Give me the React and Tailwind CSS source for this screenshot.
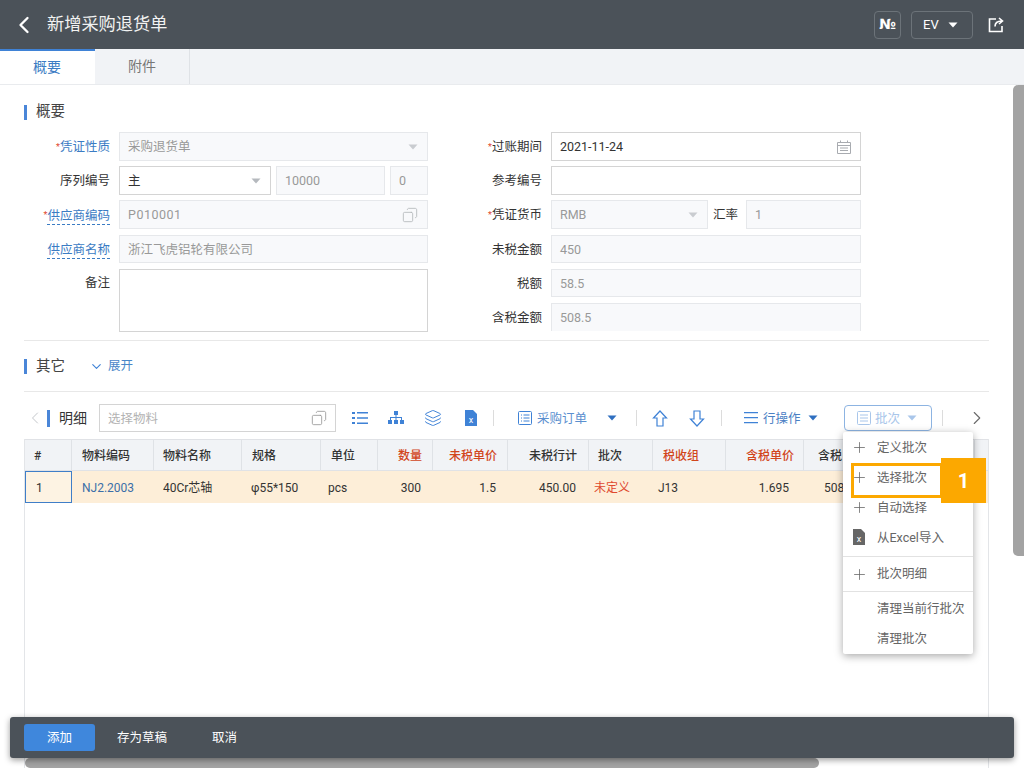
import { ChevronLeft, ChevronRight, ChevronDown, Plus, Layers, Copy } from 'lucide-react';

const font = { fontFamily: 'Roboto, "Noto Sans CJK SC", sans-serif' };

function Caret({ className = 'text-[#b5b9be]' }) {
    return (
        <svg width="10" height="6" viewBox="0 0 10 6" className={className}>
            <path d="M0.5 0.5h9L5 5.5z" fill="currentColor" />
        </svg>
    );
}

function Label({ children, required, link, width, align = 'items-center pt-[2px]' }) {
    return (
        <div className={`shrink-0 flex justify-end text-[12.5px] ${align} ${width} ${link ? 'text-[#3b7cc4]' : 'text-[#333]'}`}>
            {required && <span className="text-[9px] text-[#e0492f]">*</span>}
            <span className={link === 'dashed' ? 'border-b border-dashed border-[#3b7cc4] leading-[17px]' : ''}>{children}</span>
        </div>
    );
}

function Field({ children, disabled, className = '', right }) {
    return (
        <div className={`h-full shrink-0 flex items-center justify-between pl-[8px] pr-[9px] border text-[12.5px] ${disabled ? 'bg-[#f8f9fb] border-[#e6e8eb] text-[#999]' : 'bg-white border-[#d4d4d4] text-[#333]'} ${className}`}>
            <span className="pt-[2px]">{children}</span>
            {right}
        </div>
    );
}

function LeftForm() {
    const label = 'w-[86px]';
    return (
        <div className="w-[428px] pl-[24px] shrink-0">
            <div className="flex h-[29px] gap-[9px]">
                <Label required link width={label}>凭证性质</Label>
                <Field disabled className="w-[309px]" right={<Caret className="text-[#c9ccd0]" />}>采购退货单</Field>
            </div>
            <div className="flex h-[29px] gap-[9px] mt-[5px]">
                <Label width={label}>序列编号</Label>
                <Field className="w-[152px]" right={<Caret />}>主</Field>
                <Field disabled className="w-[109px] ml-[-4px]">10000</Field>
                <Field disabled className="w-[38px] ml-[-4px]">0</Field>
            </div>
            <div className="flex h-[29px] gap-[9px] mt-[5px]">
                <Label required link="dashed" width={label}>供应商编码</Label>
                <Field disabled className="w-[309px] tracking-[0.5px]" right={<Copy size={16} strokeWidth={1.3} className="text-[#b5b8bc] -scale-x-100" />}>P010001</Field>
            </div>
            <div className="flex h-[28px] gap-[9px] mt-[6px]">
                <Label link="dashed" width={label}>供应商名称</Label>
                <Field disabled className="w-[309px]">浙江飞虎铝轮有限公司</Field>
            </div>
            <div className="flex h-[63px] gap-[9px] mt-[6px]">
                <Label width={label} align="items-start pt-[5px]">备注</Label>
                <div className="w-[309px] border border-[#d4d4d4] bg-white" />
            </div>
        </div>
    );
}

function RightForm() {
    const label = 'w-[114px]';
    return (
        <div className="h-[199px] overflow-hidden">
            <div className="flex h-[29px] gap-[9px]">
                <Label required width={label}>过账期间</Label>
                <Field className="w-[310px]" right={
                    <svg width="14" height="14" viewBox="0 0 14 14" fill="none" stroke="#a8abb0">
                        <path d="M0.5 2.5h13v11h-13zM0.5 5.5h13M3.5 0.5v2M10.5 0.5v2M3 8h8M3 10.5h8" />
                    </svg>
                }>2021-11-24</Field>
            </div>
            <div className="flex h-[29px] gap-[9px] mt-[5px]">
                <Label width={label}>参考编号</Label>
                <Field className="w-[310px]" />
            </div>
            <div className="flex h-[29px] gap-[9px] mt-[5px]">
                <Label required width={label}>凭证货币</Label>
                <Field disabled className="w-[157px]" right={<Caret className="text-[#c9ccd0]" />}>RMB</Field>
                <span className="text-[12.5px] text-[#333] self-center pt-[2px] ml-[-4px] w-[24px] whitespace-nowrap">汇率</span>
                <Field disabled className="w-[115px]">1</Field>
            </div>
            <div className="flex h-[28px] gap-[9px] mt-[6px]">
                <Label width={label}>未税金额</Label>
                <Field disabled className="w-[310px]">450</Field>
            </div>
            <div className="flex h-[28px] gap-[9px] mt-[6px]">
                <Label width={label}>税额</Label>
                <Field disabled className="w-[310px]">58.5</Field>
            </div>
            <div className="flex h-[29px] gap-[9px] mt-[6px]">
                <Label width={label}>含税金额</Label>
                <Field disabled className="w-[310px]">508.5</Field>
            </div>
        </div>
    );
}

function Toolbar() {
    return (
        <div className="flex items-center h-[28px] mt-[12px] text-[12.5px] text-[#5b8fcf]">
            <ChevronLeft size={20} strokeWidth={1.2} className="ml-[25px] text-[#c4c7cb] shrink-0" />
            <div className="w-[3px] h-[17px] bg-[#4a86d8] ml-[2px]" />
            <span className="ml-[9px] text-[14px] text-[#333] w-[31px]">明细</span>
            <div className="ml-[9px] w-[237px] h-full flex items-center justify-between px-[8px] border border-[#d4d4d4] text-[#b3b3b3]">
                <span className="pt-[2px]">选择物料</span>
                <Copy size={16} strokeWidth={1.3} className="text-[#9a9a9a] -scale-x-100" />
            </div>
            <svg width="16" height="12" viewBox="0 0 16 12" className="ml-[16px] text-[#3f82d6]" fill="currentColor">
                <path d="M0 0h3v2H0zM5 0h11v1.6H5zM0 5h3v2H0zM5 5.2h11v1.6H5zM0 10h3v2H0zM5 10.4h11v1.6H5z" />
            </svg>
            <svg width="16" height="14" viewBox="0 0 16 14" className="ml-[20px] text-[#3f82d6]" fill="currentColor">
                <path d="M6 0h4v4H6zM7.5 4h1v3h-1zM2 6h12v1H2zM2 6h1v3H2zM13 6h1v3h-1zM0 9h4v4H0zM6 9h4v4H6zM12 9h4v4h-4zM7.5 7h1v2h-1z" />
            </svg>
            <Layers size={18} strokeWidth={1.3} className="ml-[20px] text-[#3f82d6]" />
            <svg width="12" height="16" viewBox="0 0 12 16" className="ml-[23px]">
                <path d="M0 0h8l4 4v12H0z" fill="#3f82d6" />
                <text x="6" y="13" textAnchor="middle" fontSize="9" fill="#fff" fontFamily="Roboto">x</text>
            </svg>
            <div className="w-px h-[16px] bg-[#dcdcdc] ml-[16px]" />
            <svg width="14" height="14" viewBox="0 0 14 14" fill="none" stroke="#3f82d6" className="ml-[24px]">
                <rect x="0.5" y="0.5" width="13" height="13" rx="1" />
                <path d="M3 4h1M5.5 4h6M3 7h1M5.5 7h6M3 10h1M5.5 10h6" />
            </svg>
            <span className="ml-[5px] w-[50px] pt-[2px]">采购订单</span>
            <Caret className="text-[#2f6fc0] ml-[20px]" />
            <div className="w-px h-[16px] bg-[#dcdcdc] ml-[19px]" />
            <svg width="16" height="17" viewBox="0 0 16 17" fill="none" stroke="#3f82d6" strokeWidth="1.2" className="ml-[15px]">
                <path d="M8 1l6.5 7H11v8H5V8H1.5z" />
            </svg>
            <svg width="16" height="17" viewBox="0 0 16 17" fill="none" stroke="#3f82d6" strokeWidth="1.2" className="ml-[21px]">
                <path d="M8 16l6.5-7H11V1H5v8H1.5z" />
            </svg>
            <div className="w-px h-[16px] bg-[#dcdcdc] ml-[16px]" />
            <svg width="14" height="12" viewBox="0 0 14 12" fill="#3f82d6" className="ml-[22px]">
                <path d="M0 0h14v1.2H0zM0 5h14v1.2H0zM0 10h14v1.2H0z" />
            </svg>
            <span className="ml-[5px] w-[38px] pt-[2px] text-[#4a80c4]">行操作</span>
            <Caret className="text-[#2f6fc0] ml-[7px]" />
            <div className="ml-[26px] w-[88px] h-[26px] rounded-[4px] border border-[#8db4e2] flex items-center pl-[12px] text-[#a9c6ea]">
                <svg width="14" height="14" viewBox="0 0 14 14" fill="none" stroke="#a9c6ea">
                    <rect x="0.5" y="0.5" width="13" height="13" rx="1" />
                    <path d="M3 4h8M3 7h8M3 10h8" />
                </svg>
                <span className="ml-[4px] w-[25px] pt-[2px]">批次</span>
                <Caret className="text-[#a9c6ea] ml-[7px]" />
            </div>
            <div className="w-px h-[16px] bg-[#dcdcdc] ml-[10px]" />
            <ChevronRight size={22} strokeWidth={1.2} className="ml-[23px] text-[#6a6a6a]" />
        </div>
    );
}

const columns = [
    { head: '#', cell: '1', w: 'w-[47px]', headPad: 'pl-[9px]', cellPad: 'pl-[10px]' },
    { head: '物料编码', cell: 'NJ2.2003', w: 'w-[82px]', headPad: 'pl-[10px]', cellPad: 'pl-[10px] text-[#3b6ea8]' },
    { head: '物料名称', cell: '40Cr芯轴', w: 'w-[88px]', headPad: 'pl-[9px]', cellPad: 'pl-[9px]' },
    { head: '规格', cell: 'φ55*150', w: 'w-[79px]', headPad: 'pl-[10px]', cellPad: 'pl-[9px]' },
    { head: '单位', cell: 'pcs', w: 'w-[57px]', headPad: 'pl-[10px]', cellPad: 'pl-[7px]' },
    { head: '数量', cell: '300', w: 'w-[55px]', headPad: 'pr-[10px] justify-end text-[#d1451b]', cellPad: 'pr-[12px] justify-end' },
    { head: '未税单价', cell: '1.5', w: 'w-[75px]', headPad: 'pr-[10px] justify-end text-[#d1451b]', cellPad: 'pr-[12px] justify-end' },
    { head: '未税行计', cell: '450.00', w: 'w-[81px]', headPad: 'pr-[11px] justify-end', cellPad: 'pr-[13px] justify-end' },
    { head: '批次', cell: '未定义', w: 'w-[64px]', headPad: 'pl-[9px]', cellPad: 'pl-[5px] text-[#e0492f]' },
    { head: '税收组', cell: 'J13', w: 'w-[73px]', headPad: 'pl-[10px] text-[#d1451b]', cellPad: 'pl-[5px]' },
    { head: '含税单价', cell: '1.695', w: 'w-[78px]', headPad: 'pr-[9px] justify-end text-[#d1451b]', cellPad: 'pr-[15px] justify-end' },
    { head: '含税', cell: '508', w: 'w-[171px]', headPad: 'pl-[14px]', cellPad: 'pl-[20px]' },
];

function DetailTable() {
    return (
        <div className="mt-[7px] ml-[24px] w-[965px] h-[400px] border-x border-[#e3e5e8] overflow-hidden text-[12px] text-[#333]">
            <div className="flex h-[32px] bg-[#f1f3f6] border-t border-b border-[#e0e2e6]">
                {columns.map((col) => (
                    <div key={col.head} className={`shrink-0 flex items-center pt-[2px] font-medium border-r border-[#dfe2e6] ${col.w} ${col.headPad}`}>
                        {col.head}
                    </div>
                ))}
            </div>
            <div className="flex h-[32px] bg-[#fdeed8]">
                {columns.map((col, i) => (
                    <div
                        key={col.head}
                        className={`shrink-0 flex items-center pt-[2px] ${col.w} ${col.cellPad} ${i === 0 ? 'border border-[#3f7ec8] bg-[#fdf3e3]' : ''}`}
                    >
                        {col.cell}
                    </div>
                ))}
            </div>
        </div>
    );
}

function PlusIcon() {
    return <Plus size={17} strokeWidth={1.1} className="text-[#666] shrink-0" />;
}

function BatchMenu() {
    const item = 'flex items-center h-[30px] pl-[8px] text-[12.5px] text-[#666]';
    return (
        <div className="absolute left-[843px] top-[432px] w-[130px] h-[222px] bg-white rounded-[2px] shadow-[0_2px_8px_rgba(0,0,0,0.35)]">
            <div className={item}><PlusIcon /><span className="ml-[9px] pt-[2px]">定义批次</span></div>
            <div className={item}><PlusIcon /><span className="ml-[9px] pt-[2px]">选择批次</span></div>
            <div className={item}><PlusIcon /><span className="ml-[9px] pt-[2px]">自动选择</span></div>
            <div className={item}>
                <svg width="12" height="16" viewBox="0 0 12 16" className="ml-[2px] mr-[3px]">
                    <path d="M0 0h8l4 4v12H0z" fill="#666" />
                    <text x="6" y="13" textAnchor="middle" fontSize="9" fill="#fff" fontFamily="Roboto">x</text>
                </svg>
                <span className="ml-[9px] pt-[2px]">从Excel导入</span>
            </div>
            <div className="border-t border-[#e2e2e2] mt-[4px]" />
            <div className={`${item} h-[34px]`}><PlusIcon /><span className="ml-[9px]">批次明细</span></div>
            <div className="border-t border-[#e2e2e2]" />
            <div className={`${item} pl-[34px] mt-[2px]`}>清理当前行批次</div>
            <div className={`${item} pl-[34px]`}>清理批次</div>
        </div>
    );
}

export default function App() {
    return (
        <div className="relative w-[1024px] h-[768px] overflow-hidden bg-white flex flex-col" style={font}>
            {/* Header */}
            <div className="h-[49px] shrink-0 bg-[#4b5259] flex items-center text-white">
                <ChevronLeft size={28} strokeWidth={2} className="ml-[10px]" />
                <h1 className="ml-[9px] text-[17.2px] text-[#f2f2f2]">新增采购退货单</h1>
                <div className="ml-auto flex items-center">
                    <div className="w-[27px] h-[28px] rounded-[4px] border border-[#6c7379] flex items-center justify-center text-[14px] font-bold font-['DejaVu_Sans']">№</div>
                    <div className="ml-[10px] w-[62px] h-[28px] rounded-[4px] border border-[#6c7379] flex items-center pl-[11px] text-[13px]">
                        EV
                        <Caret className="text-white ml-[9px]" />
                    </div>
                    <svg width="16" height="16" viewBox="0 0 16 16" fill="none" stroke="#fff" strokeWidth="1.6" className="ml-[15px] mr-[20px]">
                        <path d="M8 2H1.5v12.5h12.5V9M7 9.5c0-3.5 2-5.5 7-5.5M11 1l3.5 3L11 7" />
                    </svg>
                </div>
            </div>

            {/* Tabs */}
            <div className="h-[36px] shrink-0 flex bg-[#f1f3f6] border-b border-[#e9ebee] text-[14px]">
                <div className="w-[95px] bg-white border-t-2 border-[#3f82d6] flex items-center justify-center pr-[1px] text-[#3b7cc4]">概要</div>
                <div className="w-[95px] border-r border-[#dfe2e6] flex items-center justify-center text-[#777]">附件</div>
            </div>

            {/* Form */}
            <div className="flex-1 overflow-hidden">
                <div className="flex items-center h-[16px] mt-[19px] ml-[24px]">
                    <div className="w-[3px] h-[15px] bg-[#4a86d8]" />
                    <span className="ml-[9px] text-[14.5px] text-[#444]">概要</span>
                </div>
                <div className="flex mt-[12px]">
                    <LeftForm />
                    <RightForm />
                </div>
                <div className="mt-[8px] ml-[24px] mr-[35px] border-t border-[#e8e8e8]" />
                <div className="flex items-center h-[50px] ml-[24px]">
                    <div className="w-[3px] h-[15px] bg-[#4a86d8]" />
                    <span className="ml-[9px] pt-[1px] text-[14.5px] text-[#444]">其它</span>
                    <ChevronDown size={15} strokeWidth={1.8} className="ml-[24px] text-[#3f82d6]" />
                    <span className="ml-[4px] pt-[1px] text-[12.5px] text-[#4a86c8]">展开</span>
                </div>
                <div className="ml-[24px] mr-[35px] border-t border-[#e8e8e8]" />
                <Toolbar />
                <DetailTable />
            </div>

            <BatchMenu />

            {/* Step highlight */}
            <div className="absolute left-[851px] top-[463px] w-[92px] h-[35px] border-[3px] border-[#fca800]" />
            <div className="absolute left-[941px] top-[458px] w-[45px] h-[45px] bg-[#fca800] flex items-center justify-center text-white text-[20px] font-bold">1</div>

            {/* Scrollbars */}
            <div className="absolute left-[1013px] top-[85px] w-[11px] h-[471px] bg-[#a3a3a3] rounded-l-[5px]" />
            <div className="absolute left-[25px] top-[758px] w-[794px] h-[10px] bg-[#a3a3a3] rounded-[5px]" />

            {/* Footer actions */}
            <div className="absolute left-[10px] top-[717px] w-[1004px] h-[41px] bg-[#4b5259] rounded-[3px] shadow-[0_2px_6px_rgba(0,0,0,0.4)] flex items-center pl-[14px] text-[12.5px] text-white">
                <button className="w-[71px] h-[27px] pt-[2px] bg-[#3f87dc] rounded-[3px]">添加</button>
                <span className="ml-[22px] pt-[2px]">存为草稿</span>
                <span className="ml-[45px] pt-[2px]">取消</span>
            </div>
        </div>
    );
}
